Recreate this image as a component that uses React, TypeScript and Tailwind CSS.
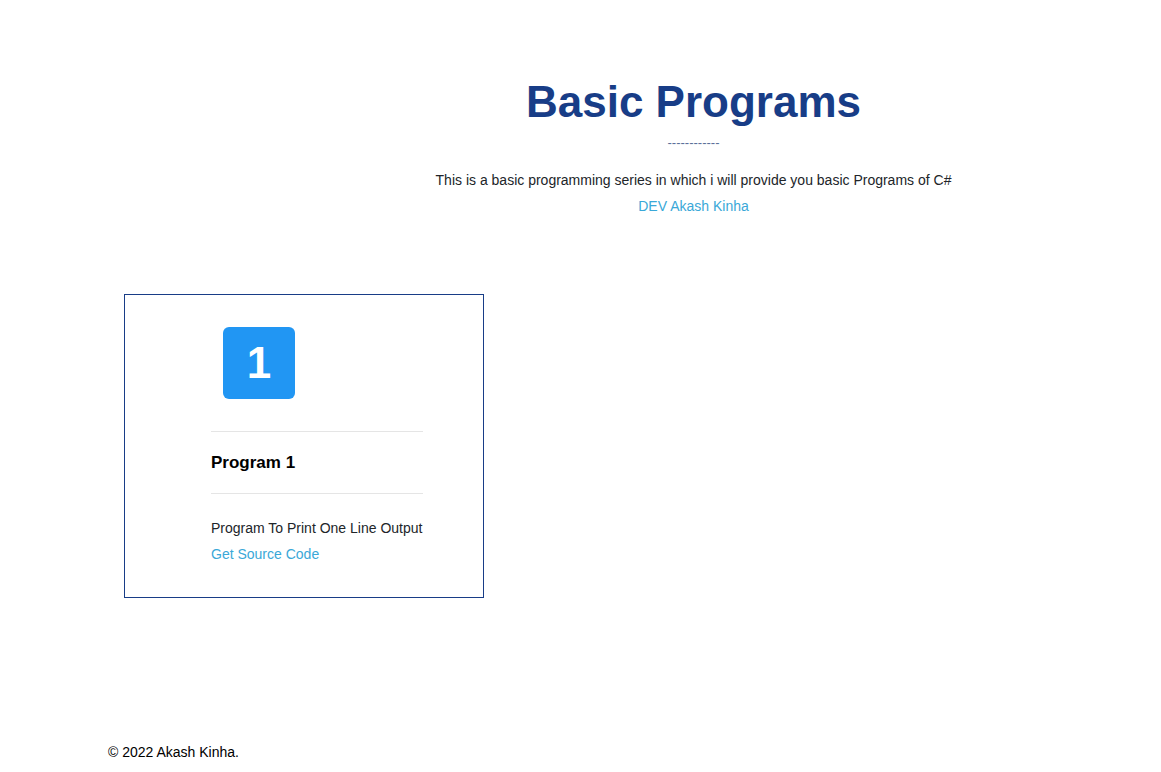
export default function App() {
    return (
        <div className="min-h-screen bg-white font-['Liberation_Sans',Arial,sans-serif] text-[#212529]">
            {/* Header */}
            <div className="ml-[226px] w-[935px] pt-[74px] flex flex-col items-center text-center">
                <h1 className="text-[44px] leading-[56px] font-bold text-[#183d87]">Basic Programs</h1>
                <div className="mt-[3px] text-[13px] leading-[20px] text-[#5b6f99]">------------</div>
                <p className="mt-[17px] text-[14px] leading-[20px]">
                    This is a basic programming series in which i will provide you basic Programs of C#
                </p>
                <a className="mt-[6px] text-[14px] leading-[20px] text-[#3aa8d8]">DEV Akash Kinha</a>
            </div>

            {/* Card */}
            <div className="ml-[124px] mt-[78px] w-[360px] border border-[#183d87] pl-[86px] pt-[32px] pb-[33px]">
                <div className="w-[212px]">
                    <div className="ml-[12px] w-[72px] h-[72px] rounded-[6px] bg-[#2196f3] flex items-center justify-center text-white text-[44px] font-bold">
                        1
                    </div>
                    <div className="mt-[32px] border-t border-[#e5e5e5]"></div>
                    <h2 className="mt-[19px] text-[17px] leading-[24px] font-bold text-black">Program 1</h2>
                    <div className="mt-[18px] border-t border-[#e5e5e5]"></div>
                    <p className="mt-[24px] text-[14px] leading-[20px] whitespace-nowrap">Program To Print One Line Output</p>
                    <a className="block mt-[6px] text-[14px] leading-[20px] text-[#3aa8d8]">Get Source Code</a>
                </div>
            </div>

            {/* Footer */}
            <footer className="ml-[108px] mt-[144px] text-[14px] leading-[20px] text-black">© 2022 Akash Kinha.</footer>
        </div>
    )
}
